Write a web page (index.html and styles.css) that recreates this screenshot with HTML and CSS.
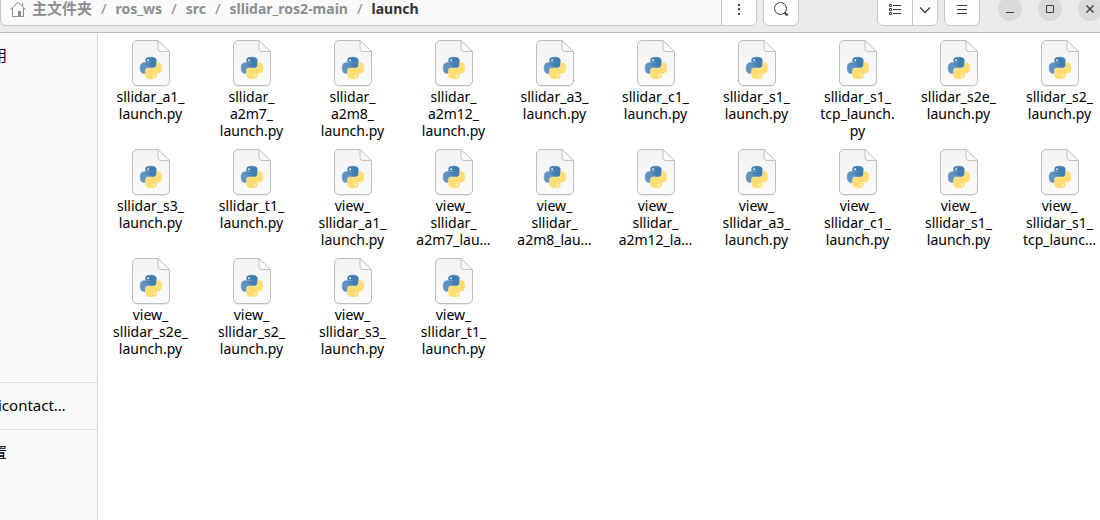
FILE: index.html
```
<!DOCTYPE html>
<html lang="zh-CN">
<head>
<meta charset="utf-8">
<title>launch</title>
<link rel="stylesheet" href="styles.css">
</head>
<body>
<svg class="defs" aria-hidden="true">
  <defs>
    <linearGradient id="paper" x1="0" y1="0" x2="0" y2="1"><stop offset="0" stop-color="#f3f3f3"/><stop offset="1" stop-color="#fafafa"/></linearGradient>
    <linearGradient id="blue" x1="1" y1="0" x2="0" y2="1"><stop offset="0.4" stop-color="#417db0"/><stop offset="0.6" stop-color="#6093c1"/></linearGradient>
    <path id="snake" d="M14.25.18l.9.2.73.26.59.3.45.32.34.34.25.34.16.33.1.3.04.26.02.2-.01.13V8.5l-.05.63-.13.55-.21.46-.26.38-.3.31-.33.25-.35.19-.35.14-.33.1-.3.07-.26.04-.21.02H8.77l-.69.05-.59.14-.5.22-.41.27-.33.32-.27.35-.2.36-.15.37-.1.35-.07.32-.04.27-.02.21v3.06H3.17l-.21-.03-.28-.07-.32-.12-.35-.18-.36-.26-.36-.36-.35-.46-.32-.59-.28-.73-.21-.88-.14-1.05-.05-1.23.06-1.22.16-1.04.24-.87.32-.71.36-.57.4-.44.42-.33.42-.24.4-.16.36-.1.32-.05.24-.01h.16l.06.01h8.16v-.83H6.18l-.01-2.75-.02-.37.05-.34.11-.31.17-.28.25-.26.31-.23.38-.2.44-.18.51-.15.58-.12.64-.1.71-.06.77-.04.84-.02 1.27.05z"/>
    <symbol id="pyfile" viewBox="0 0 40 48">
      <path d="M6 1.500H27L38.500 13V42A5 5 0 0 1 33.500 47H6.500A5 5 0 0 1 1.500 42V6A5 5 0 0 1 6 1.500Z" fill="#000" opacity=".08"/>
      <path d="M6 .5H27L38.500 12V41A4.500 4.500 0 0 1 34 45.500H6A4.500 4.500 0 0 1 1.500 41V5A4.500 4.500 0 0 1 6 .5Z" fill="url(#paper)" stroke="#bdbdbd"/>
      <path d="M27 .5V8.500Q27 11.500 30 11.500H38.500Z" fill="#faf9f8" stroke="#c4c2c0"/>
      <g transform="translate(9.300 17.300) scale(.89)" stroke-width=".8">
        <use href="#snake" fill="url(#blue)" stroke="url(#blue)"/>
        <use href="#snake" fill="#ffdd70" stroke="#ffdd70" transform="rotate(180 12 12)"/>
        <circle cx="8.800" cy="3.300" r="1.100" fill="#eef4f9"/>
        <circle cx="15.200" cy="20.700" r="1.100" fill="#fff8e2"/>
      </g>
    </symbol>
  </defs>
</svg>
<header class="headerbar">
  <div class="pathbar">
    <nav class="crumbs">
      <a class="crumb home" href="#"><svg width="16" height="16" viewBox="0 0 16 16" fill="none" stroke="currentColor"><path d="M.5 8.500L8 1.200l7.500 7.300M2.500 7v8.500h11V7M12.500 5V2"/><path d="M8 10h3v5H8z" fill="currentColor" stroke="none"/></svg>主文件夹</a>
      <span class="sep">/</span><a class="crumb" href="#">ros_ws</a>
      <span class="sep">/</span><a class="crumb" href="#">src</a>
      <span class="sep">/</span><a class="crumb" href="#">sllidar_ros2-main</a>
      <span class="sep">/</span><a class="crumb current" href="#">launch</a>
    </nav>
    <button class="path-menu" aria-label="Folder menu"><svg width="16" height="16" viewBox="0 0 16 16"><path d="M7 3h2v2H7zM7 7h2v2H7zM7 12h2v2H7z" fill="currentColor"/></svg></button>
  </div>
  <button class="tool" aria-label="Search"><svg width="16" height="16" viewBox="0 0 16 16" fill="none" stroke="currentColor"><circle cx="7.500" cy="7.500" r="6"/><path d="M11.500 11.500l3 3" stroke-width="2"/></svg></button>
  <div class="views">
    <button class="tool list" aria-label="List view"><svg width="16" height="16" viewBox="0 0 16 16" fill="none" stroke="currentColor"><path d="M2.500 3.500h2v2h-2zM2.500 7.500h2v2h-2zM2.500 11.500h2v2h-2zM6 4.500h8M6 8.500h8M6 12.500h8"/></svg></button>
    <button class="tool more" aria-label="View options"><svg width="16" height="16" viewBox="0 0 16 16" fill="none" stroke="currentColor"><path d="M3 6.500l5 5 5-5" stroke-width="1.300"/></svg></button>
  </div>
  <button class="tool" aria-label="Main menu"><svg width="16" height="16" viewBox="0 0 16 16" fill="none" stroke="currentColor"><path d="M3 4.500h10M3 8.500h10M3 12.500h10"/></svg></button>
  <div class="window-controls">
    <button class="round" aria-label="Minimize"><svg width="16" height="16" viewBox="0 0 16 16"><path d="M4 11h8v1H4z" fill="currentColor"/></svg></button>
    <button class="round" aria-label="Maximize"><svg width="16" height="16" viewBox="0 0 16 16" fill="none" stroke="currentColor"><path d="M4.500 4.500h7v7h-7z"/></svg></button>
    <button class="round" aria-label="Close"><svg width="16" height="16" viewBox="0 0 16 16" fill="none" stroke="currentColor"><path d="M4.500 4.500l7 7M11.500 4.500l-7 7" stroke-width="1.400"/></svg></button>
  </div>
</header>
<div class="content">
  <aside class="sidebar">
    <div class="places"><a class="place cjk" href="#">用</a></div>
    <div class="group"><a class="place" href="#">icontact…</a></div>
    <div class="group"><a class="place cjk" href="#">置</a></div>
  </aside>
  <main class="files" id="files"></main>
</div>
<script src="files.js"></script>
</body>
</html>
```
FILE: styles.css
```
* { box-sizing: border-box; }
body {
  margin: 0;
  height: 100vh;
  overflow: hidden;
  display: flex;
  flex-direction: column;
  background: #fff;
  color: #000;
  font: 14px/17px "Noto Sans", "Noto Sans CJK SC", sans-serif;
}
.defs { position: absolute; width: 0; height: 0; }
button { padding: 0; border: 0; font: inherit; color: #3d3d3d; background: #fff; display: flex; align-items: center; justify-content: center; }
a { color: inherit; text-decoration: none; }

.headerbar {
  flex: none;
  display: flex;
  gap: 6px;
  margin-top: -9px;
  padding-bottom: 6px;
  background: #ebebeb;
  border-bottom: 1px solid #bdbdbd;
}
.pathbar, .views, .headerbar > .tool {
  height: 35px;
  border: 1px solid #c6c6c6;
  border-radius: 6px;
  overflow: hidden;
}
.pathbar { flex: 1; display: flex; background: #fafafa; }
.crumbs { flex: 1; display: flex; align-items: center; gap: 9px; padding-left: 9px; color: #8b8e8f; font-weight: 700; white-space: nowrap; }
.home { display: flex; align-items: center; gap: 6px; font-size: 15px; }
.sep { font-weight: 400; font-size: 15px; }
.current { color: #333; }
.path-menu { width: 35px; border-left: 1px solid #c6c6c6; }
.tool { width: 36px; }
.views { display: flex; margin-left: 72px; }
.views .list { width: 34px; }
.views .more { width: 25px; border-left: 1px solid #c6c6c6; }
.window-controls { display: flex; align-items: center; gap: 16px; margin-left: 12px; margin-right: -2px; }
.round { width: 24px; height: 24px; border-radius: 50%; background: #dadada; }

.content { flex: 1; min-height: 0; display: flex; }
.sidebar { flex: none; width: 98px; display: flex; flex-direction: column; background: #fafafa; border-right: 1px solid #d5d5d5; overflow: hidden; font-size: 15px; }
.places { height: 349px; }
.group { border-top: 1px solid #dedede; }
.place { display: flex; align-items: center; height: 45px; margin-left: -2px; margin-bottom: 1px; }
.cjk { margin-left: -8px; }

.files { flex: 1; min-width: 0; overflow: hidden; display: grid; grid-template-columns: repeat(10, 101px); grid-auto-rows: 99px; align-content: start; row-gap: 10px; padding: 7px 0 0 2px; }
.file { display: flex; flex-direction: column; align-items: center; text-align: center; white-space: nowrap; }
.file svg { width: 40px; height: 48px; flex: none; }
```
FILE: files.js
```
const files = [
  "sllidar_a1_|launch.py", "sllidar_|a2m7_|launch.py", "sllidar_|a2m8_|launch.py", "sllidar_|a2m12_|launch.py",
  "sllidar_a3_|launch.py", "sllidar_c1_|launch.py", "sllidar_s1_|launch.py", "sllidar_s1_|tcp_launch.|py",
  "sllidar_s2e_|launch.py", "sllidar_s2_|launch.py",
  "sllidar_s3_|launch.py", "sllidar_t1_|launch.py", "view_|sllidar_a1_|launch.py", "view_|sllidar_|a2m7_lau…",
  "view_|sllidar_|a2m8_lau…", "view_|sllidar_|a2m12_la…", "view_|sllidar_a3_|launch.py", "view_|sllidar_c1_|launch.py",
  "view_|sllidar_s1_|launch.py", "view_|sllidar_s1_|tcp_launc…",
  "view_|sllidar_s2e_|launch.py", "view_|sllidar_s2_|launch.py", "view_|sllidar_s3_|launch.py", "view_|sllidar_t1_|launch.py"
];
document.getElementById("files").innerHTML = files.map(name =>
  `<div class="file"><svg aria-hidden="true"><use href="#pyfile"/></svg><span>${name.split("|").join("<br>")}</span></div>`
).join("");
```
